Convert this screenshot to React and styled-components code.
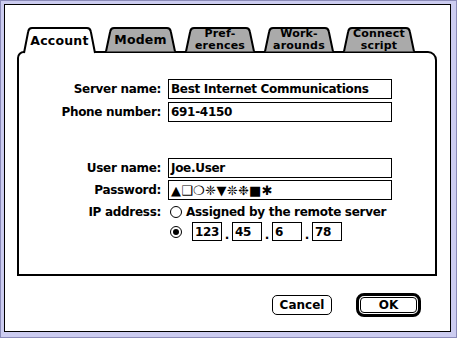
import styled, { createGlobalStyle } from 'styled-components';

const GlobalStyle = createGlobalStyle`
  html, body {
    margin: 0;
    padding: 0;
    background: #fff;
  }
  body {
    font-family: "DejaVu Sans", "Liberation Sans", sans-serif;
  }
`;

const Frame = styled.div`
  width: 457px;
  height: 338px;
  box-sizing: border-box;
  display: flex;
  background: #ccccf0;
  border: 1px solid #8a8ab8;
  padding: 3px 5px 5px 3px;
`;

const Dialog = styled.div`
  flex: 1;
  display: flex;
  flex-direction: column;
  background: #fff;
  border: 1px solid #000;
  padding: 22px 0 0 12px;
  color: #000;
  font-weight: bold;
  font-size: 12px;
  letter-spacing: -0.3px;
`;

const TabRow = styled.div`
  display: flex;
  gap: 9px;
  padding-left: 6px;
  height: 26px;
  position: relative;
  z-index: 1;
`;

const Tab = styled.div`
  position: relative;
  isolation: isolate;
  width: ${(p) => p.width}px;
  height: 26px;
  display: flex;
  align-items: center;
  justify-content: center;
  text-align: center;
  line-height: ${(p) => (p.twoLine ? 12.5 : 14)}px;
  padding-bottom: ${(p) => (p.active ? 0 : 2)}px;
  box-sizing: border-box;
  font-size: ${(p) => (p.twoLine ? 11 : 12.5)}px;
  letter-spacing: ${(p) => (p.twoLine ? 0.2 : 0.2)}px;
`;

const TabShape = styled.svg`
  position: absolute;
  inset: 0;
  z-index: -1;
  overflow: visible;
`;

const TabLabel = styled.span`
  padding-top: 2px;
`;

const Panel = styled.div`
  width: 420px;
  height: 225px;
  box-sizing: border-box;
  border: 2px solid #000;
  border-radius: 7px 9px 0 0;
  margin-top: -2px;
  display: flex;
  flex-direction: column;
`;

const Row = styled.div`
  display: flex;
  align-items: center;
  gap: 7px;
  height: ${(p) => p.h || 20}px;
  margin-top: ${(p) => p.mt}px;
`;

const Label = styled.div`
  width: 142px;
  text-align: right;
  white-space: nowrap;
`;

const Field = styled.div`
  width: ${(p) => p.w || 224}px;
  height: ${(p) => p.h || 20}px;
  box-sizing: border-box;
  border: 1px solid #000;
  padding-left: 2px;
  display: flex;
  align-items: center;
  white-space: nowrap;
  overflow: hidden;
`;

const Dingbats = styled.span`
  font-weight: normal;
  font-size: 13px;
  letter-spacing: 0.3px;
`;

const Choice = styled.div`
  display: flex;
  align-items: center;
  padding-left: 2px;
`;

const Radio = styled.span`
  width: 12px;
  height: 12px;
  box-sizing: border-box;
  border: 1px solid #000;
  border-radius: 50%;
  display: flex;
  align-items: center;
  justify-content: center;
  margin-right: ${(p) => p.mr}px;
`;

const RadioDot = styled.span`
  width: 6px;
  height: 6px;
  border-radius: 50%;
  background: #000;
`;

const IpGroup = styled.div`
  display: flex;
  align-items: flex-end;
`;

const IpDot = styled.span`
  width: 10px;
  text-align: center;
  line-height: 12px;
`;

const ButtonRow = styled.div`
  display: flex;
  justify-content: flex-end;
  align-items: center;
  gap: 24px;
  margin-top: 17px;
  padding-right: 29px;
  height: 24px;
`;

const Button = styled.div`
  width: ${(p) => p.w}px;
  height: ${(p) => p.h}px;
  box-sizing: border-box;
  border: 1px solid #000;
  border-radius: ${(p) => p.r || 5}px;
  display: flex;
  align-items: center;
  justify-content: center;
  letter-spacing: 0;
`;

const DefaultRing = styled.div`
  width: 65px;
  height: 24px;
  box-sizing: border-box;
  border: 3px solid #000;
  border-radius: 8px;
  padding: 1px;
  display: flex;
`;

const tabs = [
  { label: ['Account'], width: 73, active: true },
  { label: ['Modem'], width: 71 },
  { label: ['Pref-', 'erences'], width: 70 },
  { label: ['Work-', 'arounds'], width: 70 },
  { label: ['Connect', 'script'], width: 72 },
];

const tabPath = (w, h) =>
  `M1,${h} L5.2,4.5 Q5.8,1 9,1 L${w - 9},1 Q${w - 5.8},1 ${w - 5.2},4.5 L${w - 1},${h}`;

const TabItem = ({ label, width, active }) => {
  const twoLine = label.length > 1;
  return (
    <Tab width={width} active={active} twoLine={twoLine}>
      <TabShape width={width} height={26} viewBox={`0 0 ${width} 26`}>
        <path
          d={active ? tabPath(width, 26) : tabPath(width, 24.5)}
          fill={active ? '#fff' : '#aaaaaa'}
          stroke="#000"
          strokeWidth="2"
        />
      </TabShape>
      <TabLabel>
        {label.map((line, i) => (
          <div key={i}>{line}</div>
        ))}
      </TabLabel>
    </Tab>
  );
};

const ipParts = ['123', '45', '6', '78'];

export default function App() {
  return (
    <>
      <GlobalStyle />
      <Frame>
        <Dialog>
          <TabRow>
            {tabs.map((t) => (
              <TabItem key={t.label.join('')} {...t} />
            ))}
          </TabRow>
          <Panel>
            <Row mt={26}>
              <Label>Server name:</Label>
              <Field>Best Internet Communications</Field>
            </Row>
            <Row mt={3}>
              <Label>Phone number:</Label>
              <Field>691-4150</Field>
            </Row>
            <Row mt={36}>
              <Label>User name:</Label>
              <Field>Joe.User</Field>
            </Row>
            <Row mt={2}>
              <Label>Password:</Label>
              <Field>
                <Dingbats>▲❑❍❈▼❊❉■✱</Dingbats>
              </Field>
            </Row>
            <Row mt={4} h={16}>
              <Label>IP address:</Label>
              <Choice>
                <Radio mr={4} />
                Assigned by the remote server
              </Choice>
            </Row>
            <Row mt={2} h={19}>
              <Label />
              <Choice>
                <Radio mr={10}>
                  <RadioDot />
                </Radio>
                <IpGroup>
                  {ipParts.map((part, i) => (
                    <IpGroup key={part}>
                      {i > 0 && <IpDot>.</IpDot>}
                      <Field w={30} h={19}>
                        {part}
                      </Field>
                    </IpGroup>
                  ))}
                </IpGroup>
              </Choice>
            </Row>
          </Panel>
          <ButtonRow>
            <Button w={60} h={20}>
              Cancel
            </Button>
            <DefaultRing>
              <Button w={57} h={16} r={4}>
                OK
              </Button>
            </DefaultRing>
          </ButtonRow>
        </Dialog>
      </Frame>
    </>
  );
}
